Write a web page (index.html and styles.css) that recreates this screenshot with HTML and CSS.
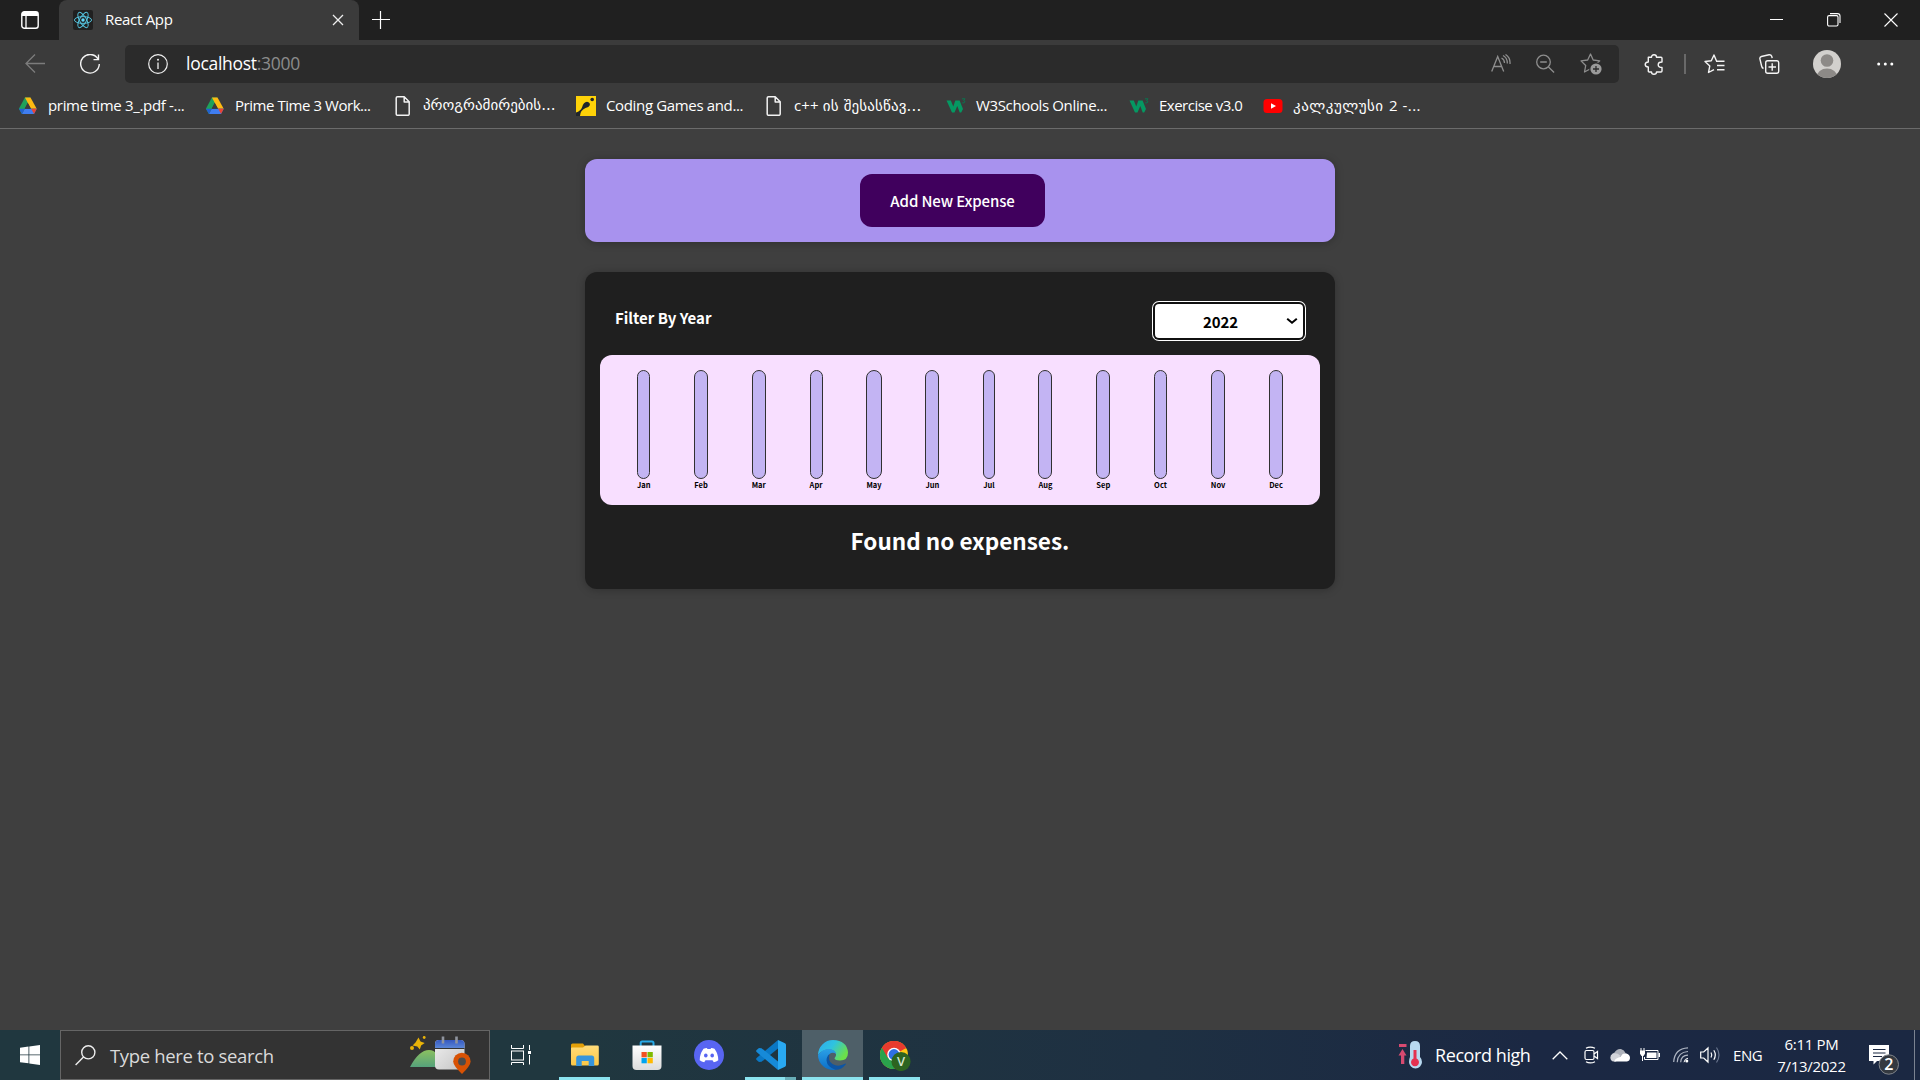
FILE: index.html
```html
<!DOCTYPE html>
<html lang="en">
<head>
<meta charset="utf-8">
<title>React App</title>
<link rel="stylesheet" href="styles.css">
</head>
<body>
<svg class="defs" width="0" height="0" aria-hidden="true">
  <defs>
    <linearGradient id="gHill" x1="0" y1="0" x2="0" y2="1"><stop offset="0" stop-color="#8bc060"/><stop offset="1" stop-color="#56a27c"/></linearGradient>
    <linearGradient id="gCal" x1="0" y1="0" x2="1" y2="1"><stop offset="0" stop-color="#efefef"/><stop offset="1" stop-color="#c4c4c4"/></linearGradient>
    <linearGradient id="gCalTop" x1="0" y1="0" x2="0" y2="1"><stop offset="0" stop-color="#3558c0"/><stop offset="1" stop-color="#5b86d6"/></linearGradient>
    <linearGradient id="gFolder" x1="0" y1="0" x2="0" y2="1"><stop offset="0" stop-color="#ffdc7a"/><stop offset="1" stop-color="#fcc846"/></linearGradient>
    <linearGradient id="gBag" x1="0" y1="0" x2="0" y2="1"><stop offset="0" stop-color="#fff"/><stop offset="1" stop-color="#dcdcdc"/></linearGradient>
    <linearGradient id="gEdgeTop" x1="0" y1="0" x2="1" y2=".5"><stop offset="0" stop-color="#2fa9ee"/><stop offset=".5" stop-color="#2fc3e0"/><stop offset="1" stop-color="#6be04a"/></linearGradient>
    <linearGradient id="gEdgeLeft" x1="0" y1="0" x2="0" y2="1"><stop offset="0" stop-color="#2ba0e6"/><stop offset="1" stop-color="#0c6fc8"/></linearGradient>
    <g id="drive">
      <path d="M6.200 0h5.600L9 5.500 6 11.300 3.200 16.500 .2 11.300z" fill="#1fa15a"/>
      <path d="M6.200 0h5.600L18 11.300h-5.700z" fill="#fdba12"/>
      <path d="M6 11.300h12L15.300 16.500H3.200z" fill="#3f7df0"/>
      <path d="M12.500 11.300H18l-2.700 5.200z" fill="#ea4335"/>
      <path d="M.2 11.300H6L3.200 16.500z" fill="#2260d2"/>
      <path d="M9 5.500l3.200 5.800H6z" fill="#3b3b3b"/>
    </g>
    <g id="page" fill="none" stroke="#f2f2f2" stroke-width="1.500" stroke-linejoin="round">
      <path d="M4 .8h6.700l5 5V18q0 1.300-1.300 1.300H4q-1.300 0-1.300-1.300V2.100Q2.700.8 4 .8zM10.700 1v4.900h4.900"/>
    </g>
    <g id="w3">
      <path d="M.5 4.500h4.300L7.300 10.500 9.300 4.500h4.300l3.400 8.500-1.800 3.500h-1.500L11.300 10 8.500 16.500H6z" fill="#059862"/>
      <path d="M16 2.800h3l-1.500 1.600q1.600.2 1.300 1.600-.4 1.300-2.600.9" stroke="#0a7650" stroke-width="1" fill="none"/>
    </g>
  </defs>
</svg>

<header class="tabs">
  <span class="tab-menu"><svg width="18" height="18" viewBox="0 0 18 18"><rect x=".8" y=".8" width="16.400" height="16.400" rx="2.500" fill="none" stroke="#fff" stroke-width="1.400"/><path d="M.8 5V3Q.8.800 3 .800h12q2.200 0 2.200 2.200v2z" fill="#fff"/><path d="M5 5v12" stroke="#fff" stroke-width="1.300"/></svg></span>
  <div class="tab">
    <svg width="20" height="20" viewBox="0 0 20 20"><rect width="20" height="20" rx="2" fill="#202020"/><g fill="none" stroke="#55c5e0" stroke-width=".95"><ellipse cx="10" cy="10" rx="8.600" ry="3.400"/><ellipse cx="10" cy="10" rx="8.600" ry="3.400" transform="rotate(60 10 10)"/><ellipse cx="10" cy="10" rx="8.600" ry="3.400" transform="rotate(120 10 10)"/></g><circle cx="10" cy="10" r="1.700" fill="#61dafb"/></svg>
    <span class="tab-title">React App</span>
    <svg class="tab-close" width="12" height="12" viewBox="0 0 12 12"><path d="M1 1l10 10M11 1L1 11" stroke="#eee" stroke-width="1.300"/></svg>
  </div>
  <svg class="new-tab" width="18" height="18" viewBox="0 0 18 18"><path d="M8.500 0v18M0 8.500h18" stroke="#fff" stroke-width="1.200"/></svg>
  <div class="window-buttons">
    <svg width="14" height="14" viewBox="0 0 14 14"><path d="M0 6.500h13" stroke="#fff"/></svg>
    <svg width="14" height="14" viewBox="0 0 14 14"><g fill="none" stroke="#fff" stroke-width="1.100"><rect x=".6" y="2.600" width="10.400" height="10.400" rx="1.500"/><path d="M3 .6h7.500q2.500 0 2.500 2.500V10"/></g></svg>
    <svg width="14" height="14" viewBox="0 0 14 14"><path d="M.5.500l13 13M13.500.500l-13 13" stroke="#fff" stroke-width="1.100"/></svg>
  </div>
</header>

<nav class="toolbar">
  <svg width="20" height="20" viewBox="0 0 20 20"><path d="M20 9.500H1M10 .5L1 9.500l9 9" fill="none" stroke="#7c7c7c" stroke-width="1.300"/></svg>
  <svg width="20" height="20" viewBox="0 0 20 20"><path d="M18 5A9.300 9.300 0 1 0 19.300 10M18.500.5V5.600H13.500" fill="none" stroke="#f4f4f4" stroke-width="1.400"/></svg>
  <div class="address">
    <svg width="20" height="20" viewBox="0 0 20 20"><circle cx="10" cy="10" r="9.300" fill="none" stroke="#f0f0f0" stroke-width="1.200"/><path d="M10 8.500V15" stroke="#f0f0f0" stroke-width="1.300"/><circle cx="10" cy="5.800" r="1" fill="#f0f0f0"/></svg>
    <span class="url">localhost<span class="port">:3000</span></span>
    <svg width="21" height="20" viewBox="0 0 21 20"><g fill="none" stroke="#8e8e8e" stroke-width="1.300"><path d="M.7 17.500L6.700 2.500l6 15M2.900 12.500h7.700M10.500 4q3 1.500 3 5M12 1.500q4.500 2.500 4.300 8M14.500.500Q19.500 3.500 19 10"/></g></svg>
    <svg width="20" height="20" viewBox="0 0 20 20"><g fill="none" stroke="#8e8e8e" stroke-width="1.300"><circle cx="7.500" cy="8" r="6.800"/><path d="M4.200 8h6.600M12.500 13l5.600 5.500"/></g></svg>
    <svg width="23" height="22" viewBox="0 0 23 22"><path d="M10.500 1l2.700 6 6.500.8-4.700 4.500 1 6.500-5.500-3-6 3.200 1.200-6.500L1 7.900 7.700 7z" fill="none" stroke="#8e8e8e" stroke-width="1.300" stroke-linejoin="round"/><circle cx="16" cy="16" r="6.800" fill="#2b2b2b"/><circle cx="16" cy="16" r="5.600" fill="#9a9a9a"/><path d="M16 13v6M13 16h6" stroke="#2b2b2b" stroke-width="1.300"/></svg>
  </div>
  <svg width="20" height="21" viewBox="0 0 20 21"><path d="M4.300 3.300H7.500Q7.500.800 10 .800T12.500 3.300H17q1 0 1 1V8Q14.200 8 14.200 10.700T18 13.400V17q0 1-1 1H12.500Q12.500 20.200 10 20.200T7.500 18H5.300q-1 0-1-1V13Q1.200 13 1.200 10.600T4.300 8z" fill="none" stroke="#f4f4f4" stroke-width="1.400" stroke-linejoin="round"/></svg>
  <i class="divider"></i>
  <svg width="21" height="20" viewBox="0 0 21 20"><path d="M12.500 7L10 1 7.300 6.700 1 7.500l4.800 4.400L4.500 18.500 10 15.700M12 7.300h8.500M13 11.500h7.500M13 15.700h7.500" fill="none" stroke="#f4f4f4" stroke-width="1.400" stroke-linejoin="round"/></svg>
  <svg width="21" height="20" viewBox="0 0 21 20"><g fill="none" stroke="#f4f4f4" stroke-width="1.400"><rect x="6.700" y="6.700" width="13" height="12.600" rx="2"/><path d="M13.200 9.300v7.500M9.500 13h7.500M4.500 14.500Q3 14 2.600 12L.9 4.800Q.6 3 2.400 2.500L10 .8q2-.3 2.700 1.500l.5 1.800"/></g></svg>
  <svg width="28" height="28" viewBox="0 0 28 28"><clipPath id="av"><circle cx="14" cy="14" r="14"/></clipPath><g clip-path="url(#av)"><rect width="28" height="28" fill="#d2d0cd"/><circle cx="14" cy="10.500" r="6.300" fill="#8d8a87"/><ellipse cx="14" cy="27" rx="10.300" ry="8.500" fill="#8d8a87"/></g></svg>
  <svg width="18" height="6" viewBox="0 0 18 6"><g fill="#fff"><circle cx="1.700" cy="3" r="1.500"/><circle cx="8.300" cy="3" r="1.500"/><circle cx="14.800" cy="3" r="1.500"/></g></svg>
</nav>

<nav class="bookmarks">
  <a><svg width="20" height="20" viewBox="-.7 -1.500 20 20"><use href="#drive"/></svg><span class="b1">prime time 3_.pdf -...</span></a>
  <a><svg width="20" height="20" viewBox="-.7 -1.500 20 20"><use href="#drive"/></svg><span class="b2">Prime Time 3 Work...</span></a>
  <a><svg width="20" height="20" viewBox="-.5 0 20 20"><use href="#page"/></svg><span class="ka b3">პროგრამირების...</span></a>
  <a><svg width="20" height="20" viewBox="0 0 20 20"><rect width="20" height="20" fill="#fed208"/><path d="M0 20v-3.500Q4.500 15 6 11.500 7.500 6 11 5.800q3.500.5 2.800 3.500-.8 2-4.300 2.700Q4 14.500 4 20z" fill="#20252b"/><circle cx="16.200" cy="3.500" r="1.800" fill="#20252b"/></svg><span class="b4">Coding Games and...</span></a>
  <a><svg width="20" height="20" viewBox="-.5 0 20 20"><use href="#page"/></svg><span class="ka b5"><span class="lat">c++ </span>ის შესასწავ...</span></a>
  <a><svg width="20" height="20" viewBox="0 0 20 20"><use href="#w3"/></svg><span class="b6">W3Schools Online...</span></a>
  <a><svg width="20" height="20" viewBox="0 0 20 20"><use href="#w3"/></svg><span class="b7">Exercise v3.0</span></a>
  <a><svg width="20" height="20" viewBox="0 0 20 20"><rect x=".5" y="3" width="19" height="14" rx="3.500" fill="#f00"/><path d="M8 7.300l5 2.700-5 2.700z" fill="#fff"/></svg><span class="ka b8">კალკულუსი <span class="lat">2 -...</span></span></a>
</nav>

<main class="app">
  <section class="new-expense"><button class="add" type="button">Add New Expense</button></section>
  <section class="expenses">
    <div class="filter">
      <label class="filter-label">Filter By Year</label>
      <div class="year"><span>2022</span><svg width="12" height="8" viewBox="0 0 12 8"><path d="M1.200 1.700L6 5.700l4.800-4" fill="none" stroke="#000" stroke-width="2"/></svg></div>
    </div>
    <div class="chart">
      <div class="month"><div class="bar"></div><span>Jan</span></div>
      <div class="month"><div class="bar"></div><span>Feb</span></div>
      <div class="month"><div class="bar"></div><span>Mar</span></div>
      <div class="month"><div class="bar"></div><span>Apr</span></div>
      <div class="month"><div class="bar"></div><span>May</span></div>
      <div class="month"><div class="bar"></div><span>Jun</span></div>
      <div class="month"><div class="bar"></div><span>Jul</span></div>
      <div class="month"><div class="bar"></div><span>Aug</span></div>
      <div class="month"><div class="bar"></div><span>Sep</span></div>
      <div class="month"><div class="bar"></div><span>Oct</span></div>
      <div class="month"><div class="bar"></div><span>Nov</span></div>
      <div class="month"><div class="bar"></div><span>Dec</span></div>
    </div>
    <h2 class="empty">Found no expenses.</h2>
  </section>
</main>

<footer class="taskbar">
  <div class="start"><svg width="20" height="20" viewBox="0 0 20 20"><path d="M0 2.800l8.500-1.200V9.500H0zM9.300 1.500L20 0v9.500H9.300zM0 10.300h8.500v8L0 17.200zM9.300 10.300H20V20L9.300 18.500z" fill="#fff"/></svg></div>
  <div class="search">
    <svg width="21" height="21" viewBox="0 0 21 21"><g fill="none" stroke="#eee" stroke-width="1.400"><circle cx="13.300" cy="7.300" r="6.600"/><path d="M8.500 12L.6 20"/></g></svg>
    <span class="search-text">Type here to search</span>
    <svg width="61" height="38" viewBox="0 0 61 38"><path d="M0 31Q9 14 19 14t12 17z" fill="url(#gHill)"/><path d="M8.500 1.500l2 4 4.200 1.500-3.600 2.500-1.300 4-2.500-3L2.500 9.500l3-3z" fill="#eab308"/><circle cx="14.200" cy="1.500" r="1.400" fill="#eab308"/><circle cx="2" cy="12" r="2" fill="#eab308"/><rect x="25" y="4" width="29.500" height="29.500" rx="4" fill="url(#gCal)"/><path d="M25 12V8q0-4 4-4h21.500q4 0 4 4v4z" fill="url(#gCalTop)"/><path d="M25 12.500h29.500" stroke="#333"/><path d="M33 .5v7M46.500.500v7" stroke="#8f949e" stroke-width="2.600"/><path d="M52 38Q43.200 29.500 43.200 25.500a8.700 8.700 0 0 1 17.400 0Q60.600 29.500 52 38z" fill="#d85204"/><circle cx="52" cy="25.500" r="3.900" fill="#4b4b4b"/></svg>
  </div>
  <div class="pinned">
    <div class="task view"><svg width="20" height="20" viewBox="0 0 20 20"><g fill="none" stroke="#fff"><rect x=".5" y="6" width="12" height="9"/><path d="M.5 0v3.500h12V0M.5 20v-2.500h12V20M18.500 0v5M18.500 10v9.500"/></g><rect x="17" y="6" width="3" height="3" fill="#fff"/></svg></div>
    <div class="task open"><svg width="28" height="24" viewBox="0 0 28 24"><path d="M0 3V2q0-1.500 1.500-1.500H12L14 3v4H0z" fill="#e3a008"/><path d="M0 5.500q0-1 1-1h11L14.500 2.500h12q1.300 0 1.300 1.300V21q0 1.500-1.500 1.500H1.500Q0 22.500 0 21z" fill="url(#gFolder)"/><path d="M5.200 23V15q0-2.500 2.500-2.500h13q2.500 0 2.500 2.500v8h-5.500v-5H10.700v5z" fill="#3695dc"/></svg></div>
    <div class="task"><svg width="30" height="30" viewBox="0 0 30 30"><path d="M8.700 6.500V3q0-1.500 1.500-1.500H20q1.500 0 1.500 1.500v3.500" fill="none" stroke="#28aae8" stroke-width="2"/><path d="M.5 5.500h29V26q0 4-4 4h-21q-4 0-4-4z" fill="url(#gBag)"/><path fill="#f25022" d="M9.500 12h5.300v5.300H9.500z"/><path fill="#7fba00" d="M15.500 12h5.300v5.300h-5.300z"/><path fill="#00a4ef" d="M9.500 18h5.300v5.300H9.500z"/><path fill="#ffb900" d="M15.500 18h5.300v5.300h-5.300z"/></svg></div>
    <div class="task"><svg width="30" height="30" viewBox="0 0 30 30"><circle cx="15" cy="15" r="15" fill="#5865f2"/><path d="M9.500 8.800Q11.500 8 12.800 7.900l.7 1.200h3l.7-1.200Q19 8 20.500 8.800q4 5.700 3.800 11.500-2 1.500-4.500 2l-1.300-2h-7l-1.300 2q-2.500-.5-4.500-2Q5.500 14.500 9.500 8.800z" fill="#fff"/><ellipse cx="11.800" cy="15.500" rx="1.800" ry="2" fill="#5865f2"/><ellipse cx="18.200" cy="15.500" rx="1.800" ry="2" fill="#5865f2"/></svg></div>
    <div class="task open multi"><svg width="30" height="30" viewBox="0 0 30 30"><path d="M22 0v8.500L5.500 21.800 3 22 .6 20Q-.3 19 .6 18z" fill="#0a77c4"/><path d="M22 30v-8.500L5.500 8.200 3 8 .6 10Q-.3 11 .6 12z" fill="#168ad8"/><path d="M22 0l7 3.300q1 .5 1 1.700v20q0 1.200-1 1.700L22 30z" fill="#29a9f2"/></svg></div>
    <div class="task open active"><svg width="30" height="30" viewBox="0 0 30 30"><path d="M0 15A15 15 0 0 1 15 0q14 .5 15 12.500 0 8-8 8-5 0-5.500-2.200Q18.500 16 18 14q-1.500-4.500-7-4.500Q4 9.500 0 15z" fill="url(#gEdgeTop)"/><path d="M0 15Q4 9 11 9q6.500.5 7 5-2-2-5-1-3.500 2-3 7 1 7 8.500 9.600Q11 31 5.500 26.500 0 22 0 15z" fill="url(#gEdgeLeft)"/><path d="M11.500 14q-2 7 3 10 6 3.500 13-.5.700 0 .3.800Q23.500 30 17.500 29.800 9 27 8.500 20.500 8.500 16.500 11.500 14z" fill="#0d55a4"/></svg></div>
    <div class="task open"><svg width="32" height="31" viewBox="-.5 0 32 31"><circle cx="14.500" cy="15" r="14" fill="#fdc813"/><path d="M14.500 15L2.400 8A14 14 0 0 1 26.600 8z" fill="#e83b2e"/><path d="M14.500 15L2.400 8A14 14 0 0 0 14.500 29l6-10.500z" fill="#2aa24c"/><path d="M14.500 8.200h12.200A14 14 0 0 0 2.400 8l6 10.500z" fill="#e83b2e"/><path d="M2.400 8A14 14 0 0 0 14.500 29l5-8.500-11-2z" fill="#2aa24c"/><circle cx="14.500" cy="14.500" r="6.800" fill="#fff"/><circle cx="14.500" cy="14.500" r="5.400" fill="#2f6fe4"/><circle cx="21.500" cy="21.500" r="9.600" fill="#2d6420"/><text x="21.500" y="26" text-anchor="middle" class="chrome-v">V</text></svg></div>
  </div>
  <div class="tray">
    <svg width="24" height="30" viewBox="0 0 24 30"><path d="M1 5.500h7.500" stroke="#d74a70" stroke-width="3"/><path d="M4.500 9l4 6.500H6.300V24H3V15.500H.5z" fill="#d74a70"/><path d="M12 6q0-5 5-5t5 5v11q2 2 2 5a6.500 6.500 0 0 1-13 0q0-3 1-5z" fill="#b8d9f0"/><path d="M15.500 10h3v8.500a4 4 0 1 1-3 0z" fill="#e43150"/></svg>
    <span class="weather">Record high</span>
    <svg width="16" height="9" viewBox="0 0 16 9"><path d="M.7 8.300L8 1l7.300 7.300" fill="none" stroke="#fff" stroke-width="1.300"/></svg>
    <svg width="15" height="18" viewBox="0 0 15 18"><g fill="none" stroke="#fff" stroke-width="1.200"><rect x="1" y="4.500" width="9" height="9" rx="1.500"/><path d="M10 8l3.500-2.500v7L10 10M2 2.300q4-2.500 9 0M2 15.700q4 2.500 9 0"/></g></svg>
    <svg width="20" height="14" viewBox="0 0 20 14"><path d="M4.500 4.500Q7 .300 11 1q3.500.8 4.500 4l-8 5.500L1.500 8q.5-3 3-3.500z" fill="#aeb2bb"/><path d="M1 12Q-.8 8 2.500 5.800q4-1.500 8 2L6 13.500H4q-2 0-3-1.500z" fill="#d2d4da"/><path d="M4 13.500Q6 10 10.500 8.500 13 4.500 16.500 5.500q3.500 1 3.500 4.500-.2 3-3 3.500z" fill="#fff"/></svg>
    <svg width="21" height="14" viewBox="0 0 21 14"><path d="M5.500 2.500H18v9H4.500V9" fill="none" stroke="#fff"/><path d="M7 4.500h9.500v5.500H6.500zM18.500 5h1.500v4h-1.500zM0 2.500h5v3.300L3.500 8h-2L0 5.800zM1 0v3M4 0v3" fill="#fff"/><path d="M1 0v3M4 0v3M2.500 7v6" stroke="#fff"/></svg>
    <svg width="17" height="16" viewBox="0 0 17 16"><g fill="none" stroke="#aeb5c2" stroke-width="1.200"><path d="M.7 15Q1.500 1.500 15 .8M4.200 15.200Q5 5 15 4.500M7.700 15.200Q8 8.500 15 8.200" /></g><path d="M11 15.200q.5-3.500 4-4" fill="none" stroke="#fff"/><circle cx="13.800" cy="14" r="1.500" fill="#fff"/></svg>
    <svg width="21" height="18" viewBox="0 0 21 18"><path d="M.7 6h3L8 2v14l-4.300-4h-3zM11 6.500q1.500 2.500 0 5M13.800 4.300q3 4.700 0 9.400" fill="none" stroke="#fff" stroke-width="1.200"/><path d="M16.500 1.500q5 7.500 0 15" fill="none" stroke="#68748d" stroke-width="1.200"/></svg>
    <span class="lang">ENG</span>
    <div class="clock"><span class="time">6:11 PM</span><span class="date">7/13/2022</span></div>
    <div class="notes"><svg width="30" height="31" viewBox="0 0 30 31"><path d="M0 1h20v16H8l-3.500 3.500V17H0z" fill="#fff"/><path d="M4 5.500h12.500M4 9h12.500M4 12.500h9" stroke="#1b2842" stroke-width="1.100"/><circle cx="19.800" cy="20.500" r="9.700" fill="#343940" stroke="#83878c"/><text x="19.800" y="26" text-anchor="middle" class="badge">2</text></svg></div>
  </div>
</footer>
</body>
</html>
```

FILE: styles.css
```css
* { box-sizing: border-box; }
body {
  margin: 0;
  width: 1920px;
  height: 1080px;
  overflow: hidden;
  display: flex;
  flex-direction: column;
  background: #3f3f3f;
  color: #fff;
  font-family: "Open Sans", "Noto Sans", "DejaVu Sans", sans-serif;
}
svg { display: block; flex: none; }
.defs { position: absolute; }
span { white-space: nowrap; }

.tabs { height: 40px; flex: none; display: flex; align-items: center; background: #202020; }
.tab-menu { width: 59px; padding-left: 21px; }
.tab {
  width: 300px;
  height: 40px;
  display: flex;
  align-items: center;
  padding: 0 15px 0 14px;
  background: #3b3b3b;
  border-radius: 8px 8px 0 0;
}
.tab-title { font-size: 15px; letter-spacing: -.3px; margin-left: 12px; padding-bottom: 2px; }
.tab-close { margin-left: auto; }
.new-tab { margin-left: 13px; }
.window-buttons { margin-left: auto; display: grid; grid-template-columns: 57px 57px 43px; width: 150px; }

.toolbar {
  height: 48px;
  flex: none;
  display: grid;
  grid-template-columns: 55px 45px 1519px 40px 20px 55px 54px 64px 18px;
  align-items: center;
  padding-left: 25px;
  background: #3b3b3b;
}
.address {
  width: 1494px;
  height: 38px;
  display: grid;
  grid-template-columns: 38px 1305px 45px 44px 23px;
  align-items: center;
  padding-left: 23px;
  background: #2b2b2b;
  border-radius: 5px;
}
.url { font-size: 17.500px; letter-spacing: -.28px; padding-bottom: 2px; }
.port { color: #8b8b8b; }
.divider { width: 2px; height: 20px; background: #696969; }

.bookmarks {
  height: 41px;
  flex: none;
  display: grid;
  grid-template-columns: 187px 188px 183px 188px 182px 183px 134px 200px;
  padding: 0 0 5px 18px;
  background: #3b3b3b;
  border-bottom: 1px solid #6b6b6b;
  font-size: 15px;
}
.bookmarks a { display: flex; align-items: center; gap: 10px; }
.bookmarks a > span { padding-bottom: 2px; }
.ka { font-family: "DejaVu Sans", sans-serif; font-size: 15px; }
.lat { font-family: "Open Sans", sans-serif; font-size: 15px; }
.b1 { letter-spacing: -.33px; }
.b2 { letter-spacing: -.45px; }
.b4 { letter-spacing: -.35px; }
.b5 { letter-spacing: .15px; }
.b6 { letter-spacing: -.36px; }
.b7 { letter-spacing: -.5px; }
.b8 { letter-spacing: .5px; }

.app {
  flex: 1;
  padding-top: 30px;
  display: flex;
  flex-direction: column;
  align-items: center;
  gap: 30px;
  font-family: "Noto Sans CJK JP", sans-serif;
}
.new-expense {
  width: 750px;
  height: 83px;
  padding: 15px 30px 15px 15px;
  display: flex;
  justify-content: center;
  background: #a892ee;
  border-radius: 12px;
  box-shadow: 0 1px 8px rgba(0, 0, 0, .25);
}
.add {
  width: 185px;
  height: 53px;
  border: 0;
  border-radius: 12px;
  background: #40005d;
  color: #fff;
  font: 500 15px "Noto Sans CJK JP", sans-serif;
  letter-spacing: -.13px;
}
.expenses {
  width: 750px;
  height: 317px;
  padding: 15px;
  background: #1f1f1f;
  border-radius: 12px;
  box-shadow: 0 1px 8px rgba(0, 0, 0, .25);
}
.filter {
  height: 68px;
  padding: 17px 17px 0 15px;
  display: flex;
  justify-content: space-between;
  align-items: flex-start;
}
.filter-label { font-size: 15px; font-weight: 700; line-height: 28px; }
.year {
  width: 148px;
  height: 34px;
  display: flex;
  align-items: center;
  padding-right: 5px;
  background: #fff;
  border-radius: 4px;
  box-shadow: 0 0 0 2px #101010, 0 0 0 3px #fff;
  color: #000;
  font-size: 15px;
  font-weight: 700;
}
.year span { flex: 1; text-align: center; letter-spacing: -.1px; }
.chart {
  height: 150px;
  padding: 15px;
  display: flex;
  justify-content: space-around;
  background: #f8dfff;
  border-radius: 12px;
}
.month { display: flex; flex-direction: column; font-size: 7.500px; font-weight: 700; line-height: 12px; color: #000; }
.bar { height: 109px; flex: none; border: 1px solid #313131; border-radius: 12px; background: #c3b4f3; }
.empty { margin: 16px 0 0; text-align: center; font-size: 22.500px; line-height: 38px; font-weight: 700; }

.taskbar { height: 50px; flex: none; display: flex; background: linear-gradient(90deg, #20373f, #20373f 30%, #1e3042 60%, #1b2843 80%, #1b2842); }
.start { width: 60px; display: flex; align-items: center; justify-content: center; }
.search {
  width: 430px;
  display: grid;
  grid-template-columns: 35px 300px 61px;
  align-items: center;
  padding-left: 14px;
  background: #333;
  border: 1px solid #656565;
}
.search-text { font-size: 18.500px; color: #dadada; letter-spacing: -.34px; }
.pinned { display: flex; width: 440px; gap: 1px; }
.task { width: 61px; flex: none; display: flex; align-items: center; justify-content: center; border: solid transparent; border-width: 3px 0 3px; background-clip: padding-box; }
.task.view { margin-right: 2px; }
.task.open { border-image: linear-gradient(90deg, transparent 5px, #8be3ef 5px, #8be3ef 56px, transparent 56px) 0 0 3; }
.task.multi { border-image: linear-gradient(90deg, transparent 5px, #8be3ef 5px, #8be3ef 45px, #68aeb8 45px, #68aeb8 56px, transparent 56px) 0 0 3; }
.task.active { border-color: #4e5f68 transparent #8be3ef; border-image: none; background: #4e5f68; }
.chrome-v { font: 600 13px "Open Sans", sans-serif; fill: #d6e6cf; }
.tray {
  margin-left: auto;
  width: 522px;
  display: grid;
  grid-template-columns: 37px 117px 32px 26px 30px 33px 27px 33px 29px 107px 46px;
  align-items: center;
}
.weather { font-size: 18px; letter-spacing: -.42px; }
.lang { font-size: 15px; letter-spacing: -.4px; }
.clock { width: 99px; display: flex; flex-direction: column; align-items: center; font-size: 15px; letter-spacing: -.3px; line-height: 22px; padding-bottom: 1px; }
.notes { height: 50px; padding-top: 14px; display: flex; border-right: 1px solid #7b8391; width: 46px; }
.badge { font: 600 16px "Open Sans", sans-serif; fill: #fff; }
```
